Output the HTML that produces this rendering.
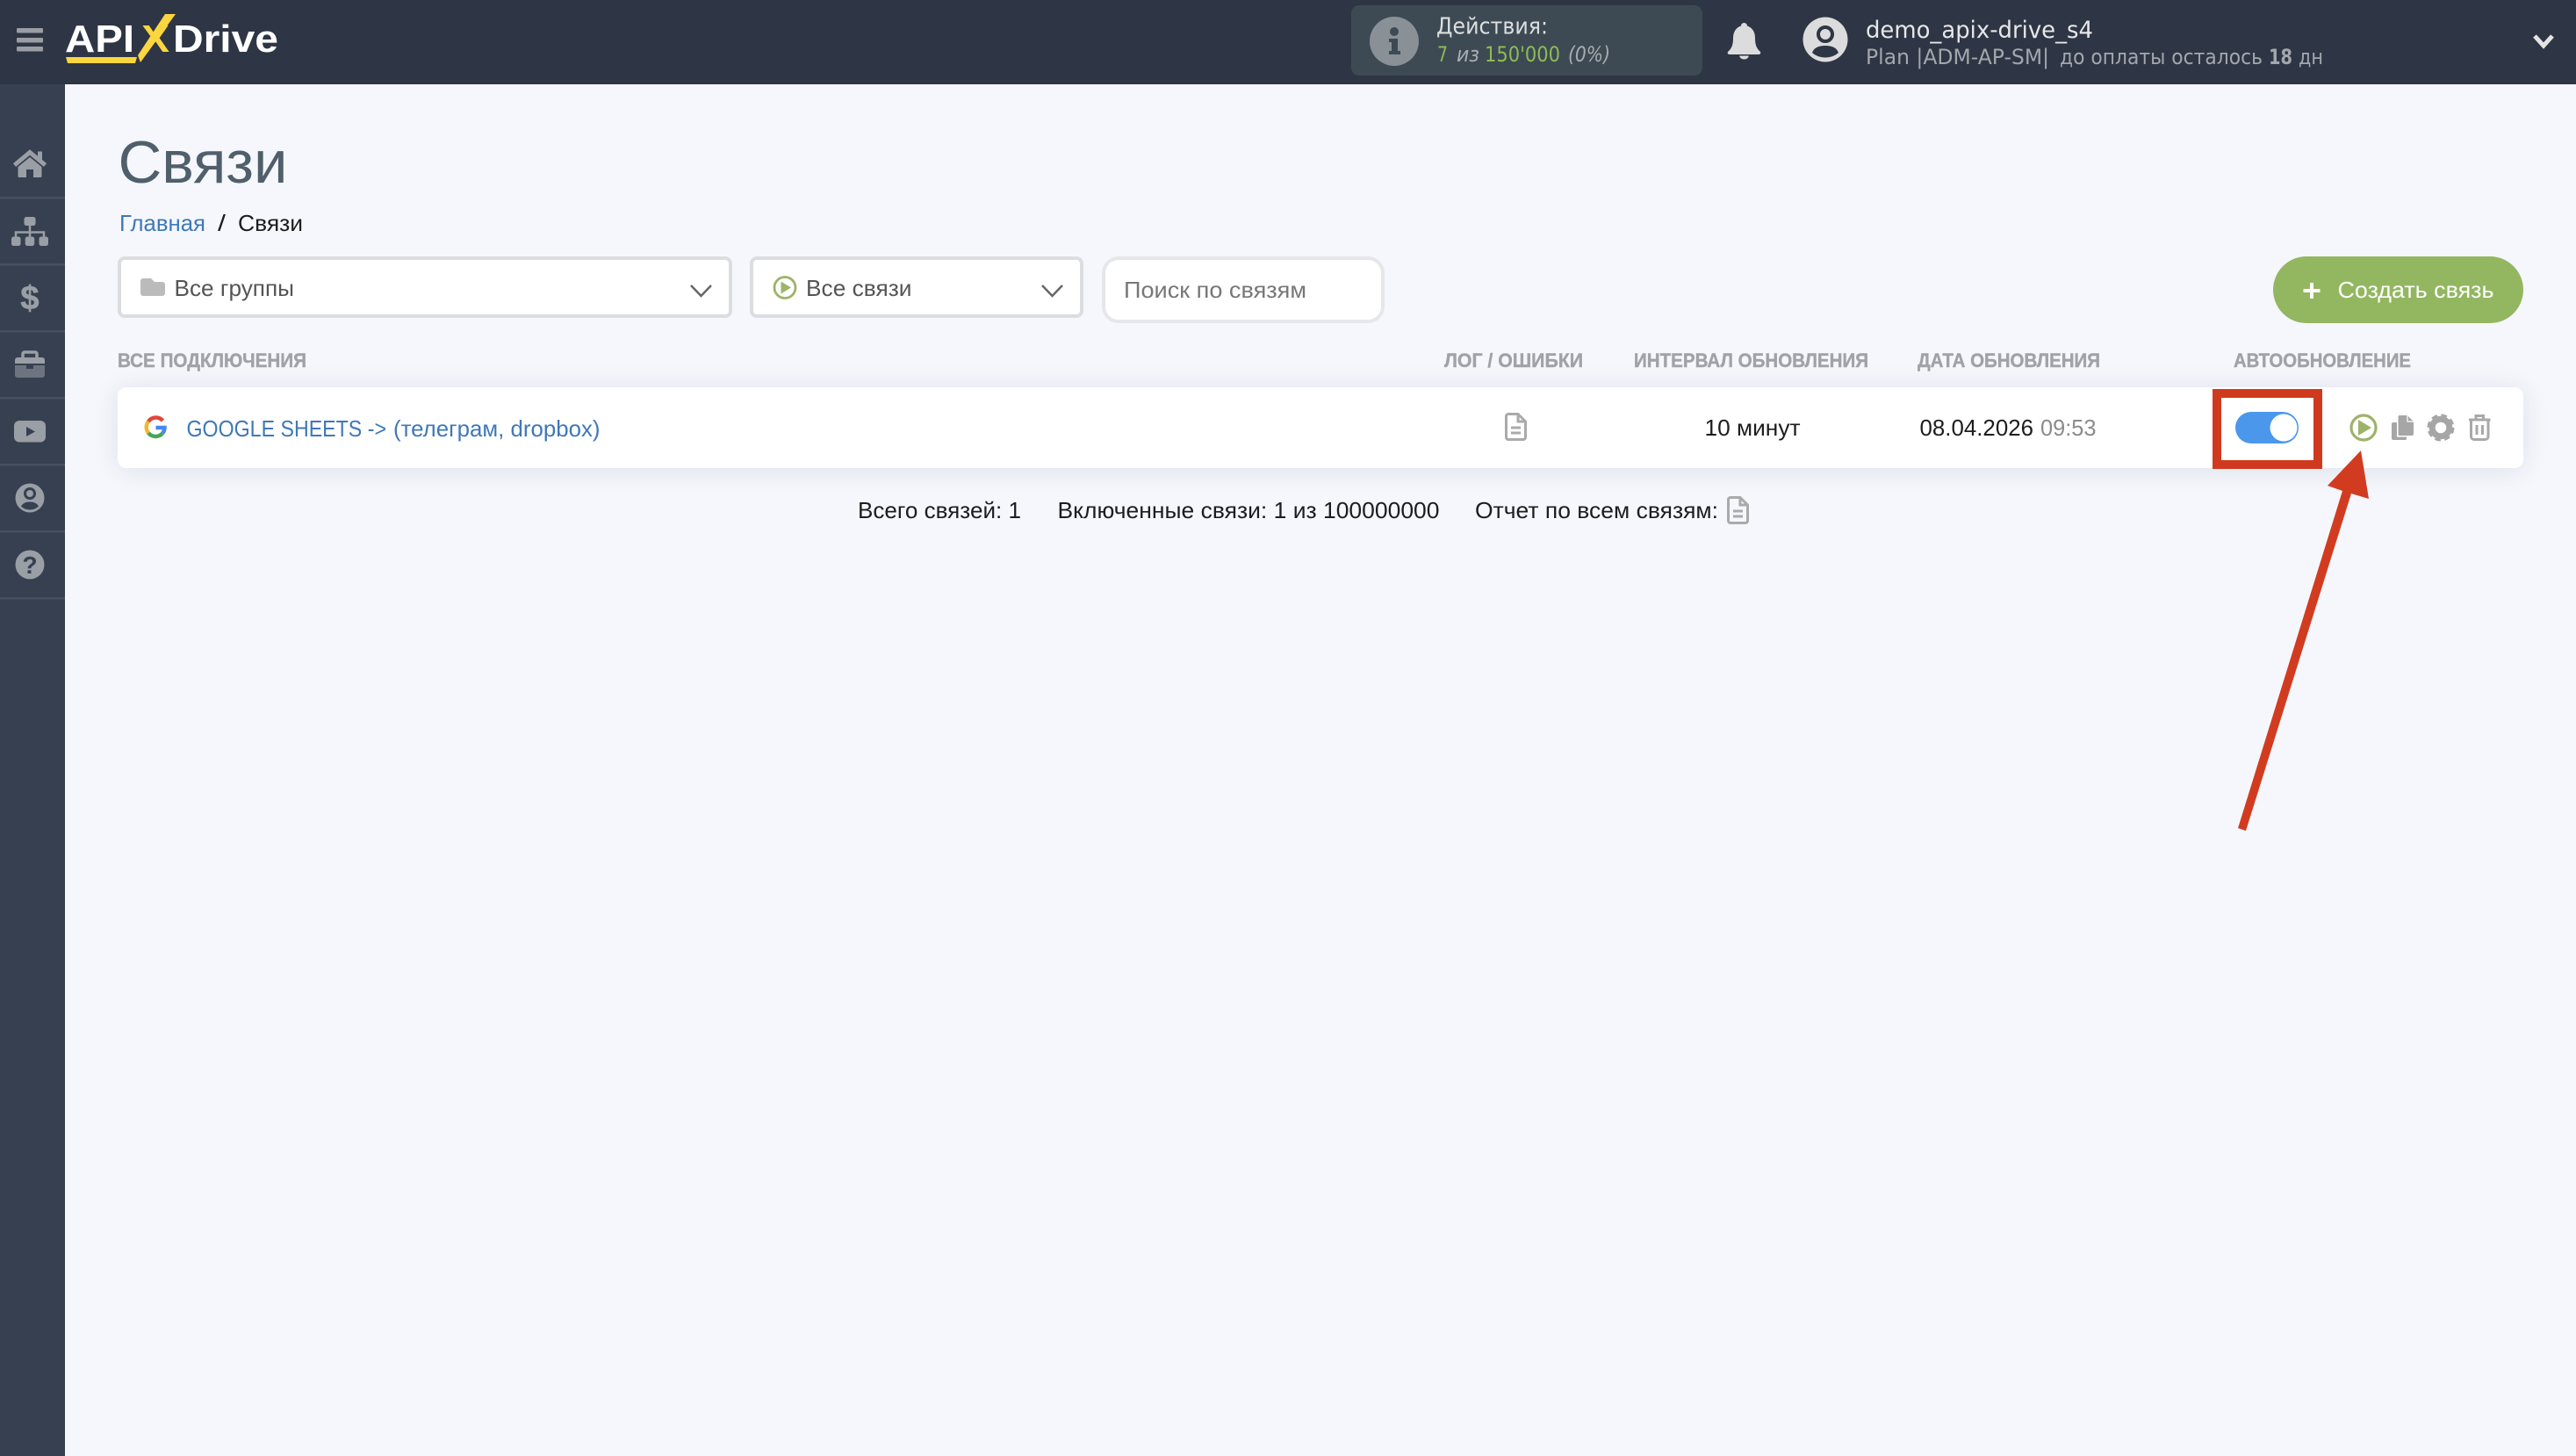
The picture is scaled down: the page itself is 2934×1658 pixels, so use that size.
<!DOCTYPE html>
<html lang="ru"><head><meta charset="utf-8"><title>Связи</title>
<style>
html,body{margin:0;padding:0;width:2934px;height:1658px;overflow:hidden;background:#f5f7fc}
.card{position:absolute;left:134px;top:441px;width:2740px;height:92px;background:#fff;border-radius:10px;box-shadow:0 2px 30px rgba(40,50,90,.11)}
svg{position:absolute;left:0;top:0}
text{font-family:"Liberation Sans",sans-serif;white-space:pre}
.d{font-family:"DejaVu Sans","Liberation Sans",sans-serif}
.h{font-weight:700;font-size:22px;fill:#a0a2a6;stroke:#a0a2a6;stroke-width:.4px}
.b{font-size:26px;fill:#1d1d1d}
.l{font-size:26px;fill:#3f78b8}
</style></head><body>
<div class="card"></div>
<svg width="2934" height="1658" viewBox="0 0 2934 1658" xmlns="http://www.w3.org/2000/svg">
<defs>
<g id="doc" fill="none" stroke="#aaa" stroke-width="3"><path d="M4 1.5H15L23.5 10V28a2.5 2.5 0 0 1-2.5 2.5H4A2.5 2.5 0 0 1 1.5 28V4A2.5 2.5 0 0 1 4 1.5Z"/><path d="M15 1.5V10H23.5M7 17H18M7 23H18"/></g>
<path id="chev" d="M0 0L11.500 12L23 0" fill="none" stroke="#666" stroke-width="2.500"/>
</defs>
<!-- header -->
<rect x="0" y="0" width="2934" height="96" fill="#2e3544"/>
<rect x="0" y="96" width="74" height="1562" fill="#364050"/>
<g fill="#9a9da3"><rect x="19" y="32" width="30" height="5.500" rx="1"/><rect x="19" y="43" width="30" height="5.500" rx="1"/><rect x="19" y="53" width="30" height="5.500" rx="1"/></g>
<!-- logo -->
<text x="74" y="59" font-size="44" font-weight="700" fill="#fff" textLength="79" lengthAdjust="spacingAndGlyphs">API</text>
<text x="197" y="59" font-size="44" font-weight="700" fill="#fff" textLength="120" lengthAdjust="spacingAndGlyphs">Drive</text>
<text x="161" y="59" font-size="44" font-weight="700" fill="#fbd63f" textLength="32" lengthAdjust="spacingAndGlyphs">X</text>
<path d="M188 16H200L160 71L157 63Z" fill="#fbd63f"/>
<path d="M75 65H156L154 72H77Z" fill="#fbd63f"/>
<!-- actions -->
<rect x="1539" y="6" width="400" height="80" rx="9" fill="#3d4a53"/>
<circle cx="1588" cy="47" r="28" fill="#899196"/>
<g fill="#3d4a53"><circle cx="1588" cy="36" r="5"/><path d="M1582 44H1592V58H1595V62H1582V58H1585V48H1582Z"/></g>
<text class="d" x="1636" y="38.500" font-size="26" fill="#dcdfe1" textLength="127" lengthAdjust="spacingAndGlyphs">Действия:</text>
<text class="d" x="1637" y="70" font-size="24" fill="#8fba55" textLength="12" lengthAdjust="spacingAndGlyphs">7</text>
<text class="d" x="1659" y="70" font-size="24" font-style="italic" fill="#a8adb0" textLength="26" lengthAdjust="spacingAndGlyphs">из</text>
<text class="d" x="1691" y="70" font-size="24" fill="#8fba55" textLength="86" lengthAdjust="spacingAndGlyphs">150'000</text>
<text class="d" x="1786" y="70" font-size="24" font-style="italic" fill="#a8adb0" textLength="48" lengthAdjust="spacingAndGlyphs">(0%)</text>
<!-- bell -->
<path d="M1986.500 26c2 0 3.500 1.500 3.500 3.500c6 2 9 7 9 14c0 8 2 12 6 15.500c.7 1.500 0 3-2 3h-33c-2 0-2.700-1.500-2-3c4-3.500 6-7.500 6-15.500c0-7 3-12 9-14c0-2 1.500-3.500 3.500-3.500Z" fill="#dcdcdc"/>
<path d="M1981 63.500h11c-1 3-3 4-5.500 4s-4.500-1-5.500-4Z" fill="#dcdcdc"/>
<!-- user -->
<circle cx="2079" cy="45" r="25.500" fill="#dcdcdc"/>
<circle cx="2079" cy="39" r="8" fill="none" stroke="#2e3544" stroke-width="4"/>
<path d="M2064 60c2-5.500 7-8 15-8s13 2.500 15 8c-4 3.500-9 5.500-15 5.500s-11-2-15-5.500Z" fill="#2e3544"/>
<text class="d" x="2125" y="43" font-size="27" fill="#e6e7e9" textLength="259" lengthAdjust="spacingAndGlyphs">demo_apix-drive_s4</text>
<text class="d" x="2125" y="73" font-size="24" fill="#a3a7ad" textLength="209" lengthAdjust="spacingAndGlyphs">Plan |ADM-AP-SM|</text>
<text class="d" x="2346" y="73" font-size="24" fill="#a3a7ad" textLength="231" lengthAdjust="spacingAndGlyphs">до оплаты осталось</text>
<text class="d" x="2584" y="73" font-size="24" font-weight="700" fill="#a3a7ad" textLength="27" lengthAdjust="spacingAndGlyphs">18</text>
<text class="d" x="2618" y="73" font-size="24" fill="#a3a7ad" textLength="28" lengthAdjust="spacingAndGlyphs">дн</text>
<path d="M2887 41L2897 52L2907 41" fill="none" stroke="#e4e4e4" stroke-width="5"/>
<!-- sidebar lines -->
<g fill="#465060"><rect y="224" width="74" height="2.500"/><rect y="300" width="74" height="2.500"/><rect y="376" width="74" height="2.500"/><rect y="452" width="74" height="2.500"/><rect y="528" width="74" height="2.500"/><rect y="604" width="74" height="2.500"/><rect y="680" width="74" height="2.500"/></g>
<!-- sidebar icons -->
<g fill="#9a9ea5">
<path d="M16.500 188L34 173.500L51.500 188" fill="none" stroke="#9a9ea5" stroke-width="5"/>
<rect x="43" y="172.500" width="5" height="10"/>
<path d="M34 179L47.500 190V200.500a1.500 1.500 0 0 1-1.500 1.500H38V193H30V202H22a1.500 1.500 0 0 1-1.500-1.500V190Z"/>
<rect x="27.500" y="247" width="13" height="10" rx="2.500"/>
<rect x="13" y="269.500" width="10.500" height="10.500" rx="2.500"/><rect x="28.700" y="269.500" width="10.500" height="10.500" rx="2.500"/><rect x="44.500" y="269.500" width="10.500" height="10.500" rx="2.500"/>
<path d="M18 270V264.500H50V270M34 257V270" fill="none" stroke="#9a9ea5" stroke-width="2.500"/>
<text x="34" y="352" font-size="38" font-weight="700" fill="#9a9ea5" stroke="#9a9ea5" stroke-width=".6" text-anchor="middle">$</text>
<path d="M17 410a3 3 0 0 1 3-3H48a3 3 0 0 1 3 3V414H17Z"/>
<path d="M17 416H30V420H38V416H51V427a3 3 0 0 1-3 3H20a3 3 0 0 1-3-3Z" fill="#6d7480"/>
<path d="M26 407V403a2 2 0 0 1 2-2H40a2 2 0 0 1 2 2V407" fill="none" stroke="#9a9ea5" stroke-width="3.500"/>
<rect x="16" y="479" width="36" height="24.500" rx="6"/>
<circle cx="34" cy="567" r="16.500"/>
<circle cx="34" cy="643" r="16.500"/>
</g>
<path d="M30 486L40 491.500L30 497Z" fill="#364050"/>
<circle cx="34" cy="562" r="5.500" fill="none" stroke="#364050" stroke-width="3"/>
<path d="M24 576.500c2-3.500 5.500-5 10-5s8 1.500 10 5c-2.500 2.500-6 4-10 4s-7.500-1.500-10-4Z" fill="#364050"/>
<text x="34" y="653" font-size="28" font-weight="700" fill="#364050" text-anchor="middle">?</text>
<!-- title -->
<text x="134.500" y="208" font-size="68" fill="#4f5f6b" textLength="193" lengthAdjust="spacingAndGlyphs">Связи</text>
<text class="l" x="136" y="263" textLength="98" lengthAdjust="spacingAndGlyphs">Главная</text>
<text class="b" x="248" y="263" textLength="9" lengthAdjust="spacingAndGlyphs">/</text>
<text class="b" x="271" y="263" textLength="74" lengthAdjust="spacingAndGlyphs">Связи</text>
<!-- filters -->
<rect x="136" y="294" width="696" height="66" rx="6" fill="#fff" stroke="#dcdde0" stroke-width="4"/>
<path d="M160 320a3 3 0 0 1 3-3H172L176 321H185a3 3 0 0 1 3 3V334a3 3 0 0 1-3 3H163a3 3 0 0 1-3-3Z" fill="#bbb"/>
<text x="198.500" y="337" font-size="26" fill="#555" textLength="136.500" lengthAdjust="spacingAndGlyphs">Все группы</text>
<use href="#chev" x="787" y="325"/>
<rect x="856" y="294" width="376" height="66" rx="6" fill="#fff" stroke="#dcdde0" stroke-width="4"/>
<circle cx="894" cy="327.500" r="12" fill="none" stroke="#9db36a" stroke-width="2.800"/>
<path d="M889.500 320.500L901 327.500L889.500 334.500Z" fill="#9db36a"/>
<text x="918" y="337" font-size="26" fill="#555" textLength="120.500" lengthAdjust="spacingAndGlyphs">Все связи</text>
<use href="#chev" x="1187" y="325"/>
<rect x="1257" y="294" width="318" height="72" rx="17" fill="#fff" stroke="#e6e7ea" stroke-width="4"/>
<text x="1280" y="339" font-size="26" fill="#777" textLength="208" lengthAdjust="spacingAndGlyphs">Поиск по связям</text>
<!-- button -->
<rect x="2589" y="292" width="285" height="76" rx="38" fill="#93b761"/>
<path d="M2633 322V340M2623.500 331H2642.500" stroke="#fff" stroke-width="4"/>
<text x="2662.500" y="339" font-size="26" fill="#fff" textLength="178" lengthAdjust="spacingAndGlyphs">Создать связь</text>
<!-- table heads -->
<text class="h" x="134" y="418" textLength="215" lengthAdjust="spacingAndGlyphs">ВСЕ ПОДКЛЮЧЕНИЯ</text>
<text class="h" x="1645" y="418" textLength="158" lengthAdjust="spacingAndGlyphs">ЛОГ / ОШИБКИ</text>
<text class="h" x="1861" y="418" textLength="267" lengthAdjust="spacingAndGlyphs">ИНТЕРВАЛ ОБНОВЛЕНИЯ</text>
<text class="h" x="2184" y="418" textLength="208" lengthAdjust="spacingAndGlyphs">ДАТА ОБНОВЛЕНИЯ</text>
<text class="h" x="2544" y="418" textLength="202" lengthAdjust="spacingAndGlyphs">АВТООБНОВЛЕНИЕ</text>
<!-- google G -->
<g fill="none" stroke-width="4.500" transform="translate(-1.500,-.5)">
<path d="M187 479.500A10.500 10.500 0 0 0 170.500 480.500" stroke="#e0473a"/>
<path d="M170.500 480.500A10.500 10.500 0 0 0 170.500 493.500" stroke="#f0b92e"/>
<path d="M170.500 493.500A10.500 10.500 0 0 0 186.500 494" stroke="#46a65a"/>
<path d="M186.500 494A10.500 10.500 0 0 0 189 487.500H179" stroke="#4a87ea"/>
</g>
<text class="l" x="212.500" y="497" textLength="227.500" lengthAdjust="spacingAndGlyphs">GOOGLE SHEETS -&gt;</text>
<text class="l" x="448" y="497" textLength="235.500" lengthAdjust="spacingAndGlyphs">(телеграм, dropbox)</text>
<use href="#doc" x="1714" y="470"/>
<text class="b" x="1941.500" y="496" textLength="109" lengthAdjust="spacingAndGlyphs">10 минут</text>
<text class="b" x="2186.500" y="496" textLength="129.500" lengthAdjust="spacingAndGlyphs">08.04.2026</text>
<text x="2324" y="496" font-size="26" fill="#8b8b8b" textLength="63.500" lengthAdjust="spacingAndGlyphs">09:53</text>
<!-- toggle -->
<rect x="2546" y="469" width="72" height="36" rx="18" fill="#4a97ec"/>
<circle cx="2601" cy="487" r="15.500" fill="#fff"/>
<!-- actions -->
<circle cx="2692" cy="487" r="14" fill="none" stroke="#9db36a" stroke-width="3.200"/>
<path d="M2686 478L2701 487L2686 496Z" fill="#9db36a"/>
<g fill="#a6a6a6">
<path d="M2733 473H2742L2749 480V494a2 2 0 0 1-2 2H2733a1.500 1.500 0 0 1-1.500-1.500V474.500a1.500 1.500 0 0 1 1.500-1.500Z"/>
<path d="M2726 481H2730V497.500H2741V499.500a1.500 1.500 0 0 1-1.500 1.500H2726a2 2 0 0 1-2-2V483a2 2 0 0 1 2-2Z"/>
</g>
<path d="M2742 473V480H2749" fill="none" stroke="#fff" stroke-width="1.200"/>
<circle cx="2780" cy="487" r="9.800" fill="none" stroke="#a6a6a6" stroke-width="7"/>
<circle cx="2780" cy="487" r="13" fill="none" stroke="#a6a6a6" stroke-width="5" stroke-dasharray="6.200 4"/>
<g fill="none" stroke="#a8a8a8" stroke-width="3"><path d="M2812 478H2836.500M2820 477V473.500H2828.500V477"/><path d="M2814.500 478V497a3.500 3.500 0 0 0 3.500 3.500H2830.500a3.500 3.500 0 0 0 3.500-3.500V478"/><path d="M2821 484V495M2827.500 484V495"/></g>
<!-- footer -->
<text class="b" x="977" y="590" textLength="186" lengthAdjust="spacingAndGlyphs">Всего связей: 1</text>
<text class="b" x="1204.500" y="590" textLength="435" lengthAdjust="spacingAndGlyphs">Включенные связи: 1 из 100000000</text>
<text class="b" x="1680" y="590" textLength="277" lengthAdjust="spacingAndGlyphs">Отчет по всем связям:</text>
<use href="#doc" x="1967" y="565"/>
<!-- annotation -->
<rect x="2525" y="448" width="115" height="81" fill="none" stroke="#cf3a1f" stroke-width="10"/>
<path d="M2549 943L2668 559L2651 553L2689 513L2698 568L2678 562L2558 946Z" fill="#d13c20"/>
</svg>
</body></html>
